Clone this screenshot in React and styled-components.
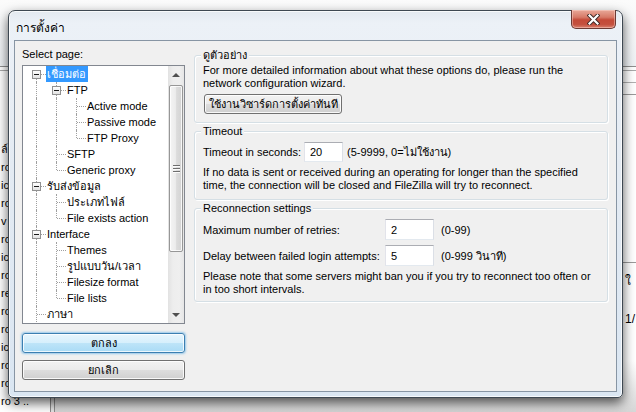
import React from "react"
import styled, { createGlobalStyle } from "styled-components"

const GlobalStyle = createGlobalStyle`
  html, body {
    margin: 0;
    padding: 0;
  }
  body {
    width: 636px;
    height: 412px;
    overflow: hidden;
    font-family: "Liberation Sans", "Noto Sans", sans-serif;
    font-size: 11px;
    color: #000;
  }
`

const Desktop = styled.div`
  position: relative;
  width: 636px;
  height: 412px;
  overflow: hidden;
  background: #fff;
`

/* the explorer window lying behind the dialog */
const BackApp = styled.div`
  display: grid;
  grid-template-rows: 67px 1fr;
  height: 100%;
`

const BackToolbar = styled.div`
  background: linear-gradient(#fbfbfb, #eef1f4);
  border-bottom: 1px solid #8f8f8f;
`

const BackBody = styled.div`
  display: grid;
  grid-template-columns: 50px 5px 1fr;
  margin-top: 3px;
  border-top: 1px solid #a9a9a9;
  min-height: 0;
`

const BackList = styled.div`
  display: flex;
  flex-direction: column;
  padding-top: 69px;
  background: #fff;
  overflow: hidden;
`

const BackRow = styled.div`
  height: 18px;
  line-height: 18px;
  white-space: nowrap;
  padding-left: 1px;
`

const Splitter = styled.div`
  border-left: 1px solid #8c8c8c;
  border-right: 1px solid #8c8c8c;
  background: #e4e4e4;
`

const BackPane = styled.div`
  display: grid;
  grid-template-rows: 12px 12px 167px 36px 1fr;
  background: linear-gradient(180deg, #fff 0%, #fff 85%, #d6d6d6 100%);
  min-width: 0;
`

const BackStrip = styled.div`
  border-bottom: 1px solid ${p => p.$line};
`

const BackTable = styled.div`
  display: grid;
  grid-template-columns: 570px 1fr;
  align-items: ${p => (p.$head ? "center" : "start")};
  padding-top: ${p => (p.$head ? 0 : 13)}px;
  border-top: 1px solid ${p => (p.$head ? "#9a9a9a" : "transparent")};
  white-space: nowrap;
  font-size: 12px;
`

/* dialog window */
const Window = styled.div`
  position: absolute;
  left: 8px;
  top: 10px;
  width: 615px;
  height: 388px;
  box-sizing: border-box;
  display: flex;
  flex-direction: column;
  padding: 0 5px 5px 5px;
  border: 1px solid #3e4852;
  border-radius: 7px 7px 5px 5px;
  background: linear-gradient(180deg, #e3e9f0 0%, #ecf1f7 12px, #e4ebf3 40%, #dae6f2 100%);
  box-shadow: 0 5px 12px rgba(0, 0, 0, 0.65), inset 0 0 0 1px rgba(255, 255, 255, 0.75);
`

const TitleBar = styled.div`
  display: flex;
  align-items: flex-start;
  height: 29px;
  flex: none;
`

const Title = styled.div`
  padding: 10px 0 0 2px;
  font-size: 12px;
  line-height: 14px;
  color: #000;
`

const CloseButton = styled.div`
  margin: -1px 1px 0 auto;
  width: 45px;
  height: 19px;
  box-sizing: border-box;
  display: flex;
  align-items: center;
  justify-content: center;
  border: 1px solid #6b3a34;
  border-top: none;
  border-radius: 0 0 5px 5px;
  background: linear-gradient(180deg, #e8a898 0%, #d77a68 40%, #c44a38 55%, #c4503e 80%, #d9806e 100%);
  box-shadow: inset 0 0 0 1px rgba(255, 220, 210, 0.45);
`

const Client = styled.div`
  flex: 1;
  display: flex;
  gap: 9px;
  padding: 0 8px 0 7px;
  background: #f0f0f0;
  border: 1px solid #8795a4;
  min-height: 0;
`

const LeftColumn = styled.div`
  width: 163px;
  flex: none;
  display: flex;
  flex-direction: column;
  padding-top: 7px;
`

const Caption = styled.div`
  line-height: 13px;
  margin-bottom: 4px;
`

const TreeBox = styled.div`
  height: 259px;
  box-sizing: border-box;
  display: flex;
  border: 1px solid #828790;
  background: #fff;
`

const TreeList = styled.div`
  flex: 1;
  padding-left: 3px;
  overflow: hidden;
  min-width: 0;
`

const TreeRow = styled.div`
  display: flex;
  height: 16px;
`

const Guide = styled.span`
  position: relative;
  flex: none;
  width: 20px;

  &::before {
    content: ${p => (p.$kind === "blank" ? "none" : '""')};
    position: absolute;
    left: 10px;
    top: ${p => (p.$kind === "first" ? "8px" : "0")};
    bottom: ${p => (p.$kind === "ell" ? "8px" : "0")};
    border-left: 1px dotted #a0a0a0;
  }

  &::after {
    content: ${p => (p.$kind === "pipe" || p.$kind === "blank" ? "none" : '""')};
    position: absolute;
    left: 11px;
    right: 0;
    top: 8px;
    border-top: 1px dotted #a0a0a0;
  }
`

const Expander = styled.span`
  position: absolute;
  left: 6px;
  top: 4px;
  width: 9px;
  height: 9px;
  box-sizing: border-box;
  border: 1px solid #919191;
  background: linear-gradient(#ffffff, #e3e3e3);
  z-index: 1;

  &::after {
    content: "";
    position: absolute;
    left: 1px;
    top: 3px;
    width: 5px;
    height: 1px;
    background: #1a1a1a;
  }
`

const TreeLabel = styled.span`
  padding: 0 2px 0 1px;
  line-height: 16px;
  white-space: nowrap;
  background: ${p => (p.$selected ? "#3399ff" : "transparent")};
  color: ${p => (p.$selected ? "#fff" : "#000")};
`

const ScrollBar = styled.div`
  width: 16px;
  flex: none;
  display: flex;
  flex-direction: column;
  background: linear-gradient(90deg, #e2e2e2 0%, #ededed 30%, #efefef 70%, #e6e6e6 100%);
`

const ScrollArrow = styled.div`
  height: 17px;
  flex: none;
  display: flex;
  align-items: center;
  justify-content: center;

  &::after {
    content: "";
    width: 0;
    height: 0;
    border-left: 4px solid transparent;
    border-right: 4px solid transparent;
    ${p => (p.$down ? "border-top: 4px solid #505050;" : "border-bottom: 4px solid #505050;")}
  }
`

const ScrollTrack = styled.div`
  flex: 1;
  padding-top: 2px;
`

const Thumb = styled.div`
  height: 167px;
  margin: 0 1px;
  box-sizing: border-box;
  display: flex;
  align-items: center;
  justify-content: center;
  border: 1px solid #979797;
  border-radius: 2px;
  background: linear-gradient(90deg, #f4f4f4 0%, #ececec 45%, #dcdcdc 55%, #d3d3d3 100%);
  box-shadow: inset 0 0 0 1px rgba(255, 255, 255, 0.8);
`

const Grip = styled.div`
  width: 7px;
  height: 8px;
  background: repeating-linear-gradient(180deg, #6e6e6e 0 1px, #fbfbfb 1px 2px, transparent 2px 3px);
`

const PushButton = styled.button`
  height: 20px;
  width: ${p => (p.$w ? `${p.$w}px` : "auto")};
  box-sizing: border-box;
  margin: 0;
  padding: 0 8px;
  font: inherit;
  color: #000;
  border: 1px solid ${p => (p.$primary ? "#3c7fb1" : "#707070")};
  border-radius: 3px;
  background: ${p =>
    p.$primary
      ? "linear-gradient(#e8f6fd 0%, #d6effc 48%, #bde4f8 52%, #a9dbf6 100%)"
      : "linear-gradient(#f2f2f2 0%, #ebebeb 48%, #dddddd 52%, #cfcfcf 100%)"};
  box-shadow: ${p =>
    p.$primary
      ? "inset 0 0 0 1px rgba(255,255,255,0.8), 0 0 2px 1px rgba(80,170,230,0.55)"
      : "inset 0 0 0 1px rgba(255,255,255,0.85)"};
  white-space: nowrap;
`

const LeftButtons = styled.div`
  display: flex;
  flex-direction: column;
  gap: 7px;
  margin-top: 9px;
`

const RightColumn = styled.div`
  flex: 1;
  display: flex;
  flex-direction: column;
  gap: 2px;
  padding-top: 8px;
  min-width: 0;
`

const Group = styled.fieldset`
  margin: 0;
  min-width: 0;
  padding: 2px 8px ${p => p.$pb}px 8px;
  border: 1px solid #d5dfe5;
  border-radius: 3px;
  box-shadow: inset 1px 1px 0 #fff, 1px 1px 0 #fff;
`

const Legend = styled.legend`
  padding: 0 2px;
  margin-left: -2px;
  line-height: 13px;
  background: #f0f0f0;
`

const Note = styled.p`
  margin: ${p => p.$mt || 0}px 0 0 0;
  line-height: 13px;
  white-space: nowrap;
`

const WizardButton = styled(PushButton)`
  margin: 4px 0 0 1px;
  padding: 0 4px;
  align-self: flex-start;
`

const FieldRow = styled.div`
  display: grid;
  grid-template-columns: ${p => p.$label}px ${p => p.$input}px auto;
  column-gap: ${p => p.$gap}px;
  align-items: center;
  margin-top: ${p => p.$mt}px;
  white-space: nowrap;
`

const Field = styled.input`
  width: 100%;
  height: ${p => p.$h}px;
  box-sizing: border-box;
  margin: 0;
  padding: 0 0 0 5px;
  font: inherit;
  color: #000;
  background: #fff;
  border: 1px solid;
  border-color: #abadb3 #dbdfe6 #e3e9ef #e2e3ea;
  outline: none;
`

const Hint = styled.span`
  margin-left: ${p => p.$shift || 0}px;
`

const Column = styled.div`
  display: flex;
  flex-direction: column;
`

const tree = [
  { label: "เชื่อมต่อ", guides: ["first"], box: true, selected: true },
  { label: "FTP", guides: ["pipe", "tee"], box: true },
  { label: "Active mode", guides: ["pipe", "pipe", "tee"] },
  { label: "Passive mode", guides: ["pipe", "pipe", "tee"] },
  { label: "FTP Proxy", guides: ["pipe", "pipe", "ell"] },
  { label: "SFTP", guides: ["pipe", "tee"] },
  { label: "Generic proxy", guides: ["pipe", "ell"] },
  { label: "รับส่งข้อมูล", guides: ["tee"], box: true },
  { label: "ประเภทไฟล์", guides: ["pipe", "tee"] },
  { label: "File exists action", guides: ["pipe", "ell"] },
  { label: "Interface", guides: ["tee"], box: true },
  { label: "Themes", guides: ["pipe", "tee"] },
  { label: "รูปแบบวัน/เวลา", guides: ["pipe", "tee"] },
  { label: "Filesize format", guides: ["pipe", "tee"] },
  { label: "File lists", guides: ["pipe", "ell"] },
  { label: "ภาษา", guides: ["tee"] },
]

const backRows = ["ล์", "ro", "ic", "ro", "v", "ro", "ic", "ro", "re", "ro", "ro", "ic", "ro", "ro", "ro 3 .."]

const CloseGlyph = () => (
  <svg width="13" height="11" viewBox="0 0 13 11">
    <path d="M2.5 1.5 L10.5 9.5 M10.5 1.5 L2.5 9.5" stroke="#3b2724" strokeWidth="4" strokeLinecap="square" />
    <path d="M2.5 1.5 L10.5 9.5 M10.5 1.5 L2.5 9.5" stroke="#fff" strokeWidth="2.2" strokeLinecap="square" />
  </svg>
)

const PageTree = () => (
  <TreeBox>
    <TreeList>
      {tree.map((item, i) => (
        <TreeRow key={i}>
          {item.guides.map((kind, j) => (
            <Guide key={j} $kind={kind}>
              {item.box && j === item.guides.length - 1 && <Expander />}
            </Guide>
          ))}
          <TreeLabel $selected={item.selected}>{item.label}</TreeLabel>
        </TreeRow>
      ))}
    </TreeList>
    <ScrollBar>
      <ScrollArrow />
      <ScrollTrack>
        <Thumb>
          <Grip />
        </Thumb>
      </ScrollTrack>
      <ScrollArrow $down />
    </ScrollBar>
  </TreeBox>
)

const App = () => {
  return (
    <Desktop>
      <GlobalStyle />
      <BackApp>
        <BackToolbar />
        <BackBody>
          <BackList>
            {backRows.map((r, i) => (
              <BackRow key={i}>{r}</BackRow>
            ))}
          </BackList>
          <Splitter />
          <BackPane>
            <BackStrip $line="#b0b0b0" />
            <BackStrip $line="#9a9a9a" />
            <div />
            <BackTable $head>
              <span />
              <span>ใ</span>
            </BackTable>
            <BackTable>
              <span />
              <span>1/</span>
            </BackTable>
          </BackPane>
        </BackBody>
      </BackApp>

      <Window>
        <TitleBar>
          <Title>การตั้งค่า</Title>
          <CloseButton>
            <CloseGlyph />
          </CloseButton>
        </TitleBar>
        <Client>
          <LeftColumn>
            <Caption>Select page:</Caption>
            <PageTree />
            <LeftButtons>
              <PushButton $primary>ตกลง</PushButton>
              <PushButton>ยกเลิก</PushButton>
            </LeftButtons>
          </LeftColumn>

          <RightColumn>
            <Group $pb={8}>
              <Legend>ดูตัวอย่าง</Legend>
              <Column>
                <Note>
                  For more detailed information about what these options do, please run the
                  <br />
                  network configuration wizard.
                </Note>
                <WizardButton $w={138}>ใช้งานวิซาร์ดการตั้งค่าทันที</WizardButton>
              </Column>
            </Group>

            <Group $pb={7}>
              <Legend>Timeout</Legend>
              <FieldRow $label={94} $input={39} $gap={7} $mt={2}>
                <span>Timeout in seconds:</span>
                <Field $h={20} defaultValue="20" />
                <Hint $shift={-3}>(5-9999, 0=ไม่ใช้งาน)</Hint>
              </FieldRow>
              <Note $mt={4}>
                If no data is sent or received during an operating for longer than the specified
                <br />
                time, the connection will be closed and FileZilla will try to reconnect.
              </Note>
            </Group>

            <Group $pb={5}>
              <Legend>Reconnection settings</Legend>
              <FieldRow $label={175} $input={49} $gap={7} $mt={2}>
                <span>Maximum number of retries:</span>
                <Field $h={21} defaultValue="2" />
                <Hint>(0-99)</Hint>
              </FieldRow>
              <FieldRow $label={175} $input={49} $gap={7} $mt={5}>
                <span>Delay between failed login attempts:</span>
                <Field $h={21} defaultValue="5" />
                <Hint>(0-999 วินาที)</Hint>
              </FieldRow>
              <Note $mt={4}>
                Please note that some servers might ban you if you try to reconnect too often or
                <br />
                in too short intervals.
              </Note>
            </Group>
          </RightColumn>
        </Client>
      </Window>
    </Desktop>
  )
}

export default App
